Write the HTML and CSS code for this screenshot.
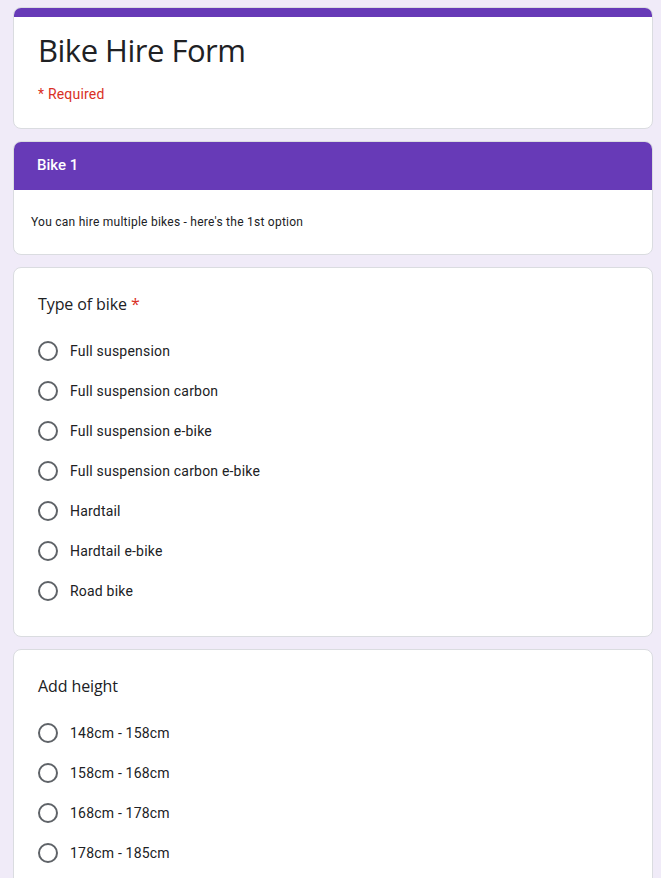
FILE: index.html
```html
<!DOCTYPE html>
<html>
<head>
<meta charset="utf-8">
<title>Bike Hire Form</title>
<link rel="stylesheet" href="styles.css">
</head>
<body>
<main class="form">
  <section class="card header-card">
    <div class="band"></div>
    <div class="header-content">
      <h1 class="form-title">Bike Hire Form</h1>
      <div class="required-note">* Required</div>
    </div>
  </section>

  <section class="card section-card">
    <div class="section-head">Bike 1</div>
    <div class="section-desc">You can hire multiple bikes - here's the 1st option</div>
  </section>

  <section class="card question-card">
    <div class="question-title">Type of bike <span class="star">*</span></div>
    <div class="options">
      <label class="option"><span class="radio"></span><span class="option-text">Full suspension</span></label>
      <label class="option"><span class="radio"></span><span class="option-text">Full suspension carbon</span></label>
      <label class="option"><span class="radio"></span><span class="option-text">Full suspension e-bike</span></label>
      <label class="option"><span class="radio"></span><span class="option-text">Full suspension carbon e-bike</span></label>
      <label class="option"><span class="radio"></span><span class="option-text">Hardtail</span></label>
      <label class="option"><span class="radio"></span><span class="option-text">Hardtail e-bike</span></label>
      <label class="option"><span class="radio"></span><span class="option-text">Road bike</span></label>
    </div>
  </section>

  <section class="card question-card">
    <div class="question-title">Add height</div>
    <div class="options">
      <label class="option"><span class="radio"></span><span class="option-text">148cm - 158cm</span></label>
      <label class="option"><span class="radio"></span><span class="option-text">158cm - 168cm</span></label>
      <label class="option"><span class="radio"></span><span class="option-text">168cm - 178cm</span></label>
      <label class="option"><span class="radio"></span><span class="option-text">178cm - 185cm</span></label>
    </div>
  </section>
</main>
</body>
</html>
```

FILE: styles.css
```css
html, body {
  margin: 0;
  padding: 0;
  background: #f0ebf8;
  font-family: Roboto, "Liberation Sans", Arial, sans-serif;
  color: #202124;
}

.form {
  width: 640px;
  margin-left: 13px;
  padding-top: 7px;
}

.card {
  background: #fff;
  border: 1px solid #dadce0;
  border-radius: 8px;
  margin-bottom: 12px;
  overflow: hidden;
}

.band {
  height: 10px;
  background: #673ab7;
  margin: -1px -1px 0;
}

.header-content {
  padding: 13px 24px 24px;
}

.form-title {
  margin: 0;
  font-family: "Open Sans", sans-serif;
  font-weight: 400;
  font-size: 31px;
  line-height: 40px;
  color: #202124;
  letter-spacing: -0.5px;
}

.required-note {
  margin-top: 14px;
  font-size: 14px;
  line-height: 20px;
  color: #d93025;
  letter-spacing: 0.2px;
}

.section-head {
  background: #673ab7;
  color: #fff;
  margin: -1px -1px 0;
  padding: 12px 24px 13px;
  font-family: Roboto, sans-serif;
  font-weight: 500;
  font-size: 15px;
  line-height: 24px;
}

.section-desc {
  padding: 24px 17px 24px;
  font-size: 12px;
  line-height: 16px;
  letter-spacing: 0.25px;
  color: #202124;
}

.question-card {
  padding: 24px 24px 25px;
}

.question-title {
  font-family: "Open Sans", sans-serif;
  font-size: 16px;
  line-height: 24px;
  letter-spacing: -0.1px;
  color: #202124;
}

.star {
  color: #d93025;
}

.options {
  margin-top: 15px;
  display: flex;
  flex-direction: column;
}

.option {
  display: flex;
  align-items: center;
  height: 40px;
}

.radio {
  box-sizing: border-box;
  width: 20px;
  height: 20px;
  border: 2px solid #5f6368;
  border-radius: 50%;
  flex: none;
}

.option-text {
  margin-left: 12px;
  font-size: 14px;
  line-height: 20px;
  letter-spacing: 0.2px;
  color: #202124;
}
```
